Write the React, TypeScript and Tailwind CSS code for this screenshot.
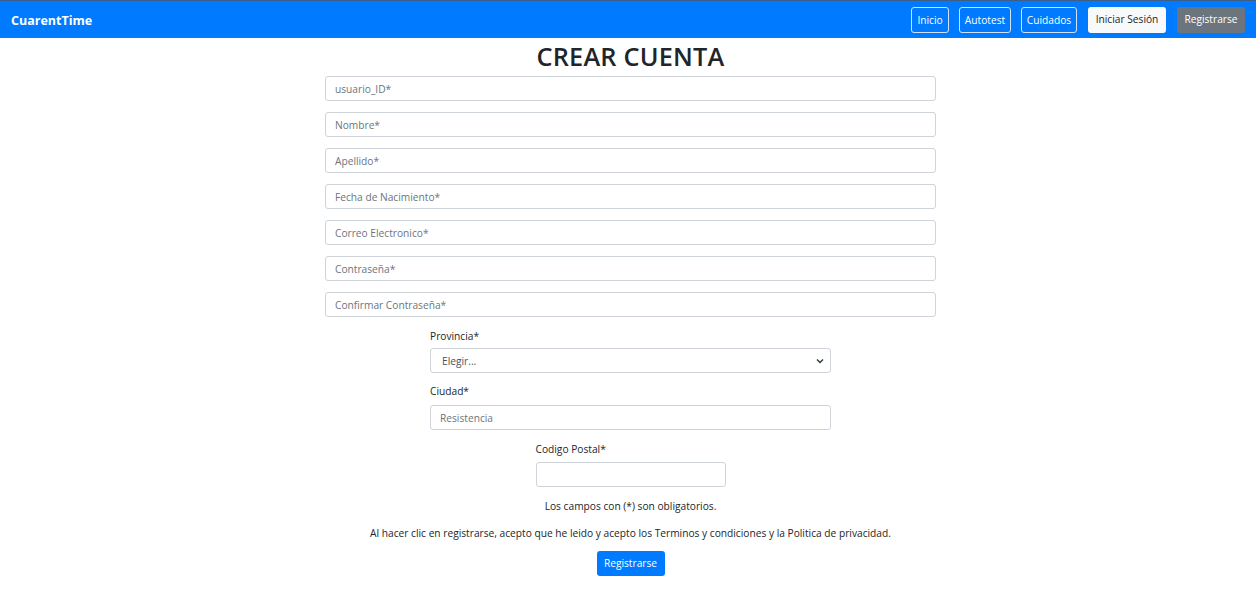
import React from "react";

const fields = [
  "usuario_ID*",
  "Nombre*",
  "Apellido*",
  "Fecha de Nacimiento*",
  "Correo Electronico*",
  "Contraseña*",
  "Confirmar Contraseña*",
];

export default function App() {
  return (
    <div
      className="min-h-[608px] bg-white text-[#212529]"
      style={{ fontFamily: '"Open Sans", "Noto Sans", Arial, sans-serif' }}
    >
      <div className="h-px bg-[#3d5f86]" />
      <nav className="flex h-[37px] items-center justify-between bg-[#007bff] pl-[11px] pr-[11px]">
        <span className="mt-[3px] text-[12.5px] font-bold text-white">CuarentTime</span>
        <div className="flex items-center">
          <button className="mr-[10px] h-[26px] w-[38px] rounded-[3px] border border-[#cfe3ff] pt-[2px] text-[10.2px] text-white">
            Inicio
          </button>
          <button className="mr-[10px] h-[26px] w-[52px] rounded-[3px] border border-[#cfe3ff] pt-[2px] text-[10.2px] text-white">
            Autotest
          </button>
          <button className="mr-[11px] h-[26px] w-[56px] rounded-[3px] border border-[#cfe3ff] pt-[2px] text-[10.2px] text-white">
            Cuidados
          </button>
          <button className="mr-[11px] h-[26px] w-[78px] rounded-[3px] bg-[#f8f9fa] pt-[1px] text-[10.2px] text-[#212529]">
            Iniciar Sesión
          </button>
          <button className="h-[26px] w-[68px] rounded-[3px] bg-[#6c757d] pt-[1px] text-[10.2px] text-white">
            Registrarse
          </button>
        </div>
      </nav>

      <div className="flex flex-col items-center pl-[5px]">
        <h1 className="mt-[2px] text-[25.3px] font-semibold leading-[33px] tracking-[0.2px] text-[#212529]">
          CREAR CUENTA
        </h1>
        <div className="mt-[3px] flex w-[611px] flex-col gap-[11px]">
          {fields.map((f) => (
            <div
              key={f}
              className="flex h-[25px] items-center rounded-[3px] border border-[#ced4da] px-[9px] pt-[2px] text-[10.2px] text-[#6c757d]"
            >
              {f}
            </div>
          ))}
        </div>

        <div className="mt-[11px] flex w-[401px] flex-col">
          <label className="text-[10.2px] leading-[16px]">Provincia*</label>
          <div className="mt-[4px] flex h-[25px] items-center justify-between rounded-[3px] border border-[#ced4da] pl-[11px] pr-[6px] pt-[2px] text-[10.2px] text-[#495057]">
            <span>Elegir...</span>
            <svg width="8" height="6" viewBox="0 0 8 6" className="-mt-[2px]">
              <path d="M1 1.5 L4 4.5 L7 1.5" stroke="#343a40" strokeWidth="1.5" fill="none" />
            </svg>
          </div>
          <label className="mt-[10px] text-[10.2px] leading-[16px]">Ciudad*</label>
          <div className="mt-[6px] flex h-[25px] items-center rounded-[3px] border border-[#ced4da] px-[9px] pt-[2px] text-[10.2px] text-[#6c757d]">
            Resistencia
          </div>
        </div>

        <div className="mt-[11px] flex w-[190px] flex-col">
          <label className="text-[10.2px] leading-[16px]">Codigo Postal*</label>
          <div className="mt-[5px] h-[25px] rounded-[3px] border border-[#ced4da]" />
        </div>

        <p className="mt-[11px] text-[10.2px] leading-[16px]">Los campos con (*) son obligatorios.</p>
        <p className="mt-[11px] text-[10.2px] leading-[16px]">
          Al hacer clic en registrarse, acepto que he leido y acepto los Terminos y condiciones y la Politica de privacidad.
        </p>
        <button className="mt-[10px] h-[25px] w-[68px] rounded-[3px] bg-[#007bff] pt-[1px] text-[10.2px] text-white">
          Registrarse
        </button>
      </div>
    </div>
  );
}
